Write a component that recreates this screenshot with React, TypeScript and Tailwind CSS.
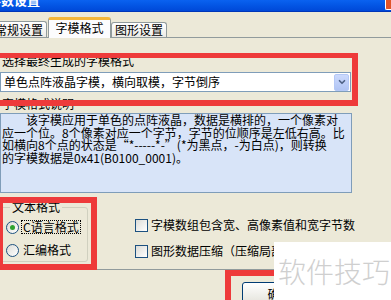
import { ChevronDown } from 'lucide-react';

function Radio({ checked }: { checked?: boolean }) {
  return (
    <span className="flex h-[13px] w-[13px] shrink-0 items-center justify-center rounded-full border border-[#1C5180] bg-linear-to-br from-[#DCDCD7] to-white">
      {checked && <span className="h-[5px] w-[5px] rounded-full bg-[#2FA32F]" />}
    </span>
  );
}

function Check() {
  return <span className="h-[13px] w-[13px] shrink-0 border border-[#1C5180] bg-linear-to-br from-[#DCDCD7] to-white" />;
}

const descLines = [
  '　　该字模应用于单色的点阵液晶，数据是横排的，一个像素对',
  '应一个位。8个像素对应一个字节，字节的位顺序是左低右高。比',
  '如横向8个点的状态是“*-----*-”(*为黑点，-为白点)，则转换',
  '的字模数据是0x41(B0100_0001)。',
];

export default function App() {
  return (
    <div className="relative h-[300px] w-[391px] overflow-hidden bg-[#ECE9D8] font-['Noto_Sans_CJK_SC',sans-serif] text-[12px] text-black">
      {/* title bar, mostly cropped */}
      <div className="flex h-[12px] items-start justify-between overflow-hidden border-b border-[#0036B8] bg-linear-to-b from-[#0A62F0] to-[#0048D8]">
        <span className="-mt-[7px] -ml-[12px] text-[13px] leading-[13px] font-bold text-white">参数设置</span>
        <span className="h-[10px] w-[6px] rounded-bl-[2px] border-b border-l border-white bg-[#E0542A]" />
      </div>

      {/* tabs */}
      <div className="flex h-[26px] items-end border-b border-[#919B9C]">
        <div className="-ml-[9px] flex h-[16px] w-[56px] items-center justify-center rounded-t-[3px] border border-b-0 border-[#919B9C] bg-linear-to-b from-white to-[#ECEBE6] leading-[14px]">
          常规设置
        </div>
        <div className="-mb-px ml-px flex h-[21px] w-[63px] items-start justify-center rounded-t-[3px] border-x border-t-[3px] border-x-[#919B9C] border-t-[#F5B73A] bg-[#FCFCFE] pt-px leading-[14px]">
          字模格式
        </div>
        <div className="flex h-[15px] w-[56px] items-center justify-center rounded-t-[3px] border border-b-0 border-[#919B9C] bg-linear-to-b from-white to-[#ECEBE6] leading-[14px]">
          图形设置
        </div>
      </div>

      {/* tab page */}
      <div className="flex flex-col border-b border-[#919B9C] pb-[7px]">
        <div className="mt-[16px] pl-[2px] leading-[14px]">选择最终生成的字模格式</div>
        <div className="mt-[4px] flex h-[20px] w-[351px] items-center justify-between border border-[#7F9DB9] bg-white pr-px pl-[3px]">
          <span className="leading-[14px]">单色点阵液晶字模，横向取模，字节倒序</span>
          <span className="flex h-[17px] w-[15px] items-center justify-center rounded-[2px] border border-[#B4C8F6] bg-linear-to-b from-[#CCDAFD] to-[#B0C4F4]">
            <ChevronDown className="h-[10px] w-[10px] text-[#4D6185]" strokeWidth={4} />
          </span>
        </div>
        <div className="mt-[5px] pl-[2px] leading-[14px]">字模格式说明</div>
        <div className="mt-[2px] h-[80px] w-[352px] border border-[#7F9DB9] bg-[#D8E4F8] pl-px leading-[12.5px]">
          {descLines.map((line) => (
            <div key={line} className="whitespace-nowrap">
              {line}
            </div>
          ))}
        </div>

        <div className="mt-[8px] flex">
          <fieldset className="w-[88px] rounded-[3px] border border-[#D0D0BF] pb-[4px]">
            <legend className="ml-[9px] px-[2px] leading-[12px]">文本格式</legend>
            <div className="mt-[7px] flex h-[14px] items-center pl-[5px]">
              <Radio checked />
              <span className="ml-[2px] border border-dotted border-black px-px leading-[12px]">C语言格式</span>
            </div>
            <div className="mt-[9px] flex h-[14px] items-center pl-[5px]">
              <Radio />
              <span className="ml-[2px] border border-transparent px-px leading-[12px]">汇编格式</span>
            </div>
          </fieldset>
          <div className="mt-[17px] ml-[47px] flex flex-col gap-[12px]">
            <div className="flex h-[14px] items-center gap-[3px] whitespace-nowrap">
              <Check />
              <span className="leading-[14px]">字模数组包含宽、高像素值和宽字节数</span>
            </div>
            <div className="flex h-[14px] items-center gap-[3px] whitespace-nowrap">
              <Check />
              <span className="leading-[14px]">图形数据压缩（压缩局部显示）</span>
            </div>
          </div>
        </div>
      </div>

      {/* dialog buttons */}
      <div className="pt-[12px] pl-[242px]">
        <div className="flex h-[23px] w-[75px] items-center justify-center rounded-[3px] border border-[#003C74] bg-linear-to-b from-white to-[#E3E2DA] leading-[14px]">
          确定
        </div>
      </div>

      {/* red annotation boxes */}
      <div className="pointer-events-none absolute top-[53px] left-[-10px] z-10 h-[53px] w-[368px] border-[5px] border-r-[6px] border-b-[6px] border-[#EE3A3A]" />
      <div className="pointer-events-none absolute top-[197px] left-[-3px] z-10 h-[73px] w-[100px] border-[6px] border-[#EE3A3A]" />
      <div className="pointer-events-none absolute top-[270px] left-[225px] z-10 h-[60px] w-[200px] border-[6px] border-[#EE3A3A]" />

      {/* watermark */}
      <div className="absolute top-[242px] left-[274px] z-30 flex h-[58px] w-[117px] items-center bg-white pl-[4px] text-[28px] leading-none font-light text-[#CFCFCF]">
        软件技巧
      </div>
    </div>
  );
}
